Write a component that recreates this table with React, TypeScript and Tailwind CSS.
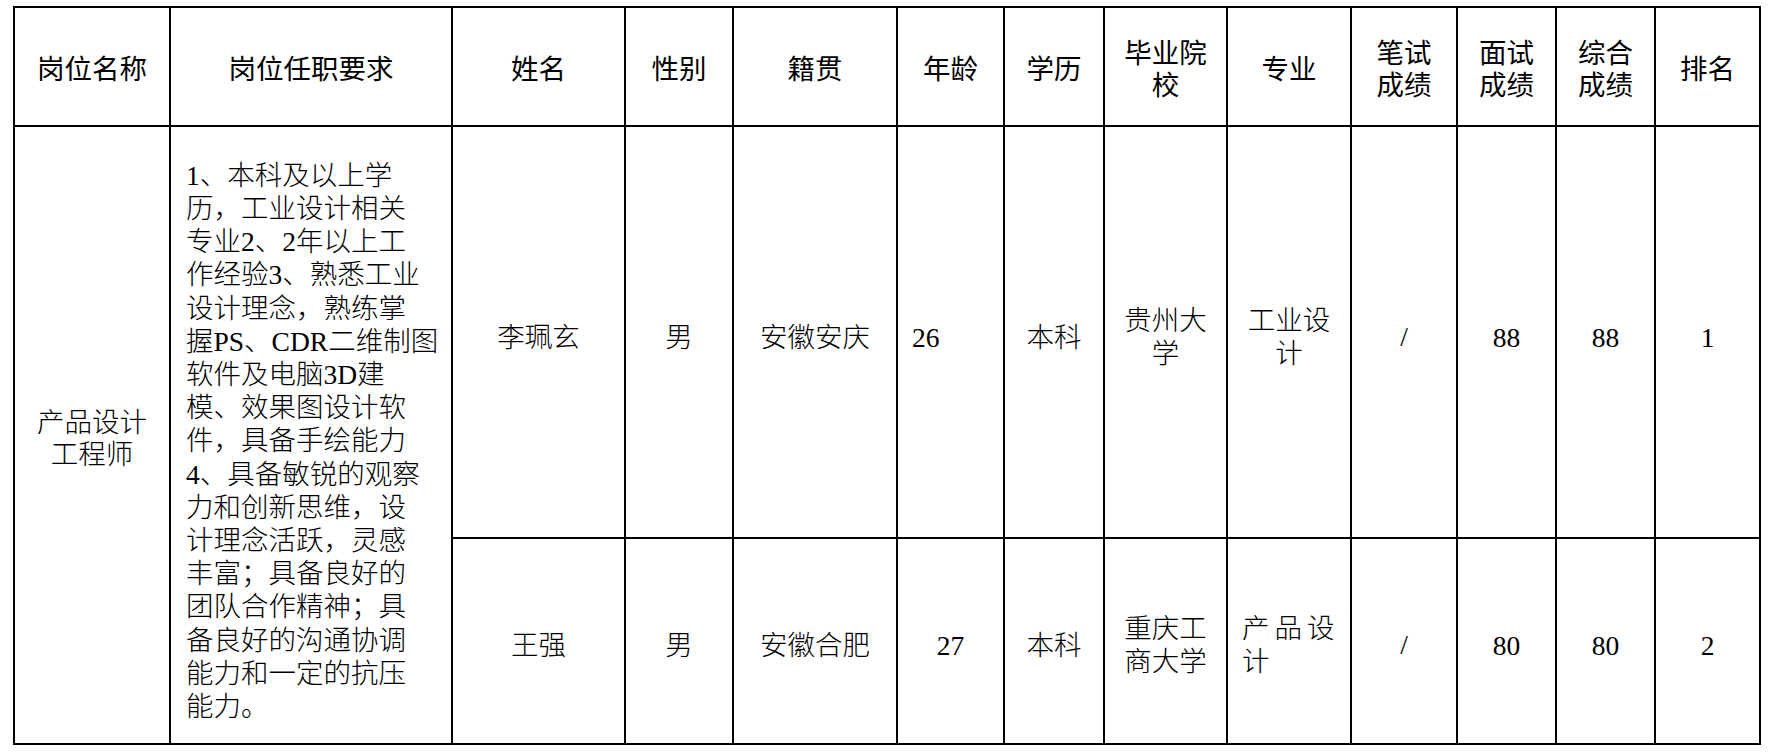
import React from "react";

const FONT = { fontFamily: '"Liberation Serif", "Noto Sans CJK SC", serif' };

const base = "border-r-2 border-b-2 border-black flex flex-col items-center justify-center text-center";

function H({ lines }: { lines: string[] }) {
  return (
    <div className={`${base} pt-[7px] leading-[32px] font-normal`}>
      {lines.map((l, i) => (
        <div key={i} className="whitespace-nowrap">{l}</div>
      ))}
    </div>
  );
}

function D({ lines, pt, className = "" }: { lines: string[]; pt: string; className?: string }) {
  return (
    <div className={`${base} ${pt} leading-[33px] font-light ${className}`}>
      {lines.map((l, i) => (
        <div key={i} className="whitespace-nowrap">{l}</div>
      ))}
    </div>
  );
}

const req = [
  "1、本科及以上学",
  "历，工业设计相关",
  "专业2、2年以上工",
  "作经验3、熟悉工业",
  "设计理念，熟练掌",
  "握PS、CDR二维制图",
  "软件及电脑3D建",
  "模、效果图设计软",
  "件，具备手绘能力",
  "4、具备敏锐的观察",
  "力和创新思维，设",
  "计理念活跃，灵感",
  "丰富；具备良好的",
  "团队合作精神；具",
  "备良好的沟通协调",
  "能力和一定的抗压",
  "能力。",
];

export default function App() {
  return (
    <div className="w-[1769px] h-[753px] bg-white text-black text-[27.5px] overflow-hidden" style={FONT}>
      <div className="ml-[13px] mt-[6px] w-fit grid grid-cols-[156px_282px_173px_108px_164px_107px_100px_123px_124px_106px_99px_99px_105px] grid-rows-[119px_412px_206px] border-l-2 border-t-2 border-black">
        <H lines={["岗位名称"]} />
        <H lines={["岗位任职要求"]} />
        <H lines={["姓名"]} />
        <H lines={["性别"]} />
        <H lines={["籍贯"]} />
        <H lines={["年龄"]} />
        <H lines={["学历"]} />
        <H lines={["毕业院", "校"]} />
        <H lines={["专业"]} />
        <H lines={["笔试", "成绩"]} />
        <H lines={["面试", "成绩"]} />
        <H lines={["综合", "成绩"]} />
        <H lines={["排名"]} />

        <div className={`${base} row-span-2 pt-[8px] leading-[32px] font-light`}>
          <div className="whitespace-nowrap">产品设计</div>
          <div className="whitespace-nowrap">工程师</div>
        </div>
        <div className="row-span-2 border-r-2 border-b-2 border-black flex flex-col justify-center items-start pl-[15px] pt-[12px] leading-[33.2px] font-light">
          {req.map((l, i) => (
            <div key={i} className="whitespace-nowrap">{l}</div>
          ))}
        </div>

        <D lines={["李珮玄"]} pt="pt-[10px]" />
        <D lines={["男"]} pt="pt-[10px]" />
        <D lines={["安徽安庆"]} pt="pt-[10px]" />
        <D lines={["26"]} pt="pt-[10px]" className="!items-start pl-[14px]" />
        <D lines={["本科"]} pt="pt-[10px]" />
        <D lines={["贵州大", "学"]} pt="pt-[10px]" />
        <D lines={["工业设", "计"]} pt="pt-[10px]" />
        <D lines={["/"]} pt="pt-[8px]" />
        <D lines={["88"]} pt="pt-[10px]" />
        <D lines={["88"]} pt="pt-[10px]" />
        <D lines={["1"]} pt="pt-[10px]" />

        <D lines={["王强"]} pt="pt-[8px]" />
        <D lines={["男"]} pt="pt-[8px]" />
        <D lines={["安徽合肥"]} pt="pt-[8px]" />
        <D lines={["27"]} pt="pt-[8px]" />
        <D lines={["本科"]} pt="pt-[8px]" />
        <D lines={["重庆工", "商大学"]} pt="pt-[8px]" />
        <D lines={["产品设", "计"]} pt="pt-[8px]" className="!items-start pl-[14px] tracking-[5px]" />
        <D lines={["/"]} pt="pt-[6px]" />
        <D lines={["80"]} pt="pt-[8px]" />
        <D lines={["80"]} pt="pt-[8px]" />
        <D lines={["2"]} pt="pt-[8px]" />
      </div>
    </div>
  );
}
